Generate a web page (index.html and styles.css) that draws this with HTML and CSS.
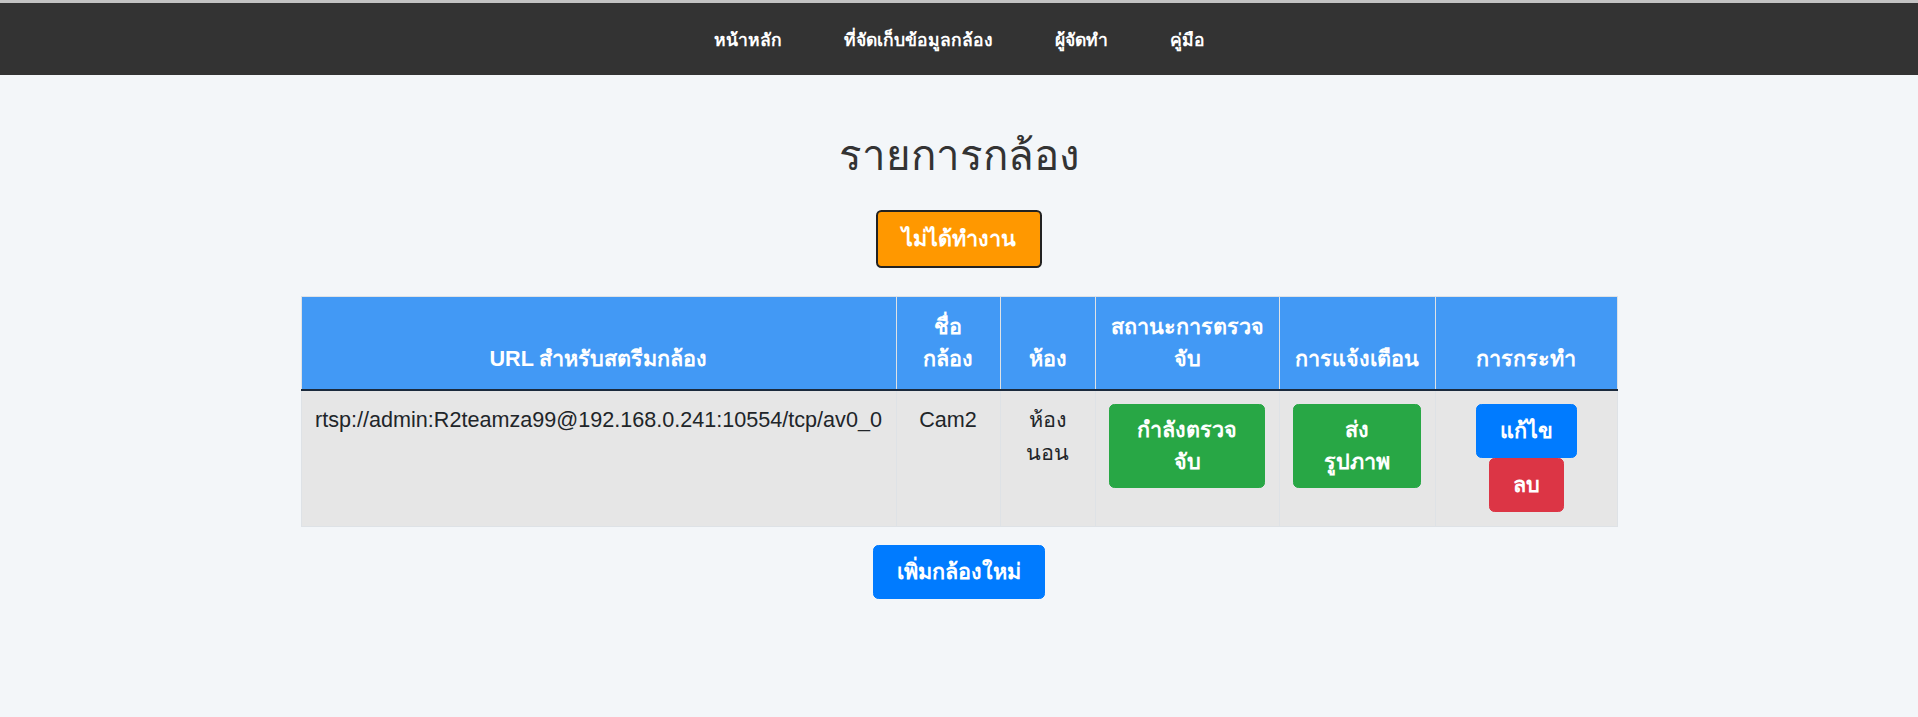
FILE: index.html
```html
<!DOCTYPE html>
<html lang="th">
<head>
<meta charset="utf-8">
<title>รายการกล้อง</title>
<link rel="stylesheet" href="styles.css">
</head>
<body>
<header class="topbar">
  <nav>
    <ul class="nav-list">
      <li><a href="#">หน้าหลัก</a></li>
      <li><a href="#">ที่จัดเก็บข้อมูลกล้อง</a></li>
      <li><a href="#">ผู้จัดทำ</a></li>
      <li><a href="#">คู่มือ</a></li>
    </ul>
  </nav>
</header>
<main class="page">
  <h1 class="page-title">รายการกล้อง</h1>
  <button class="btn btn-status">ไม่ได้ทำงาน</button>
  <table class="cam-table">
    <colgroup>
      <col class="c-url"><col class="c-name"><col class="c-room"><col class="c-state"><col class="c-alert"><col class="c-act">
    </colgroup>
    <thead>
      <tr>
        <th>URL สำหรับสตรีมกล้อง</th>
        <th>ชื่อ<br>กล้อง</th>
        <th>ห้อง</th>
        <th>สถานะการตรวจ<br>จับ</th>
        <th>การแจ้งเตือน</th>
        <th>การกระทำ</th>
      </tr>
    </thead>
    <tbody>
      <tr>
        <td class="url-cell">rtsp://admin:R2teamza99@192.168.0.241:10554/tcp/av0_0</td>
        <td>Cam2</td>
        <td>ห้อง<br>นอน</td>
        <td><button class="btn btn-success btn-block">กำลังตรวจ<br>จับ</button></td>
        <td><button class="btn btn-success btn-block">ส่ง<br>รูปภาพ</button></td>
        <td>
          <div class="actions">
            <button class="btn btn-primary">แก้ไข</button>
            <button class="btn btn-danger">ลบ</button>
          </div>
        </td>
      </tr>
    </tbody>
  </table>
  <button class="btn btn-primary btn-add">เพิ่มกล้องใหม่</button>
</main>
</body>
</html>
```
FILE: styles.css
```css
* { box-sizing: border-box; }
html, body { margin: 0; padding: 0; }
body {
  background: #f3f6f9;
  font-family: "Liberation Sans", Arial, sans-serif;
  font-size: 21.6px;
  line-height: 1.5;
  color: #212529;
  min-height: 717px;
}
.topbar {
  background: #333333;
  border-top: 3px solid #c3c3c3;
  height: 75px;
}
.nav-list {
  list-style: none;
  margin: 0;
  padding: 0;
  height: 72px;
  display: flex;
  justify-content: center;
  align-items: center;
  gap: 62px;
}
.nav-list a {
  color: #ffffff;
  text-decoration: none;
  font-size: 17.5px;
  font-weight: bold;
}
.page {
  display: flex;
  flex-direction: column;
  align-items: center;
  padding-top: 55px;
}
.page-title {
  margin: 0 0 28px;
  font-size: 42px;
  line-height: 52px;
  font-weight: 500;
  color: #333333;
}
.btn {
  font-family: inherit;
  font-size: 21.6px;
  line-height: 32.4px;
  font-weight: bold;
  color: #ffffff;
  border: 1px solid transparent;
  border-radius: 5.4px;
  padding: 9.8px 23px;
  cursor: pointer;
}
.btn-status {
  background: #ff9800;
  border: 2px solid #222222;
  padding: 10.8px 24px;
}
.btn-success { background: #28a745; border-color: #28a745; padding: 8.6px 10px; }
.btn-primary { background: #007bff; border-color: #007bff; }
.btn-danger { background: #dc3545; border-color: #dc3545; }
.btn-block { display: block; width: 100%; }
.cam-table {
  margin-top: 28px;
  width: 1316px;
  table-layout: fixed;
  border-collapse: collapse;
}
.c-url { width: 595px; }
.c-name { width: 104px; }
.c-room { width: 95px; }
.c-state { width: 184px; }
.c-alert { width: 156px; }
.c-act { width: 182px; }
.cam-table th,
.cam-table td {
  padding: 13.5px;
  border: 1px solid #dee2e6;
  line-height: 32.4px;
  text-align: center;
}
.cam-table th {
  background: #4299f5;
  color: #ffffff;
  font-weight: bold;
  vertical-align: bottom;
  border-bottom: 2px solid #1b2a3c;
}
.cam-table td {
  background: #e6e6e6;
  vertical-align: top;
}
.cam-table td.url-cell { text-align: left; }
.actions {
  display: flex;
  flex-direction: column;
  align-items: center;
}
.btn-add { margin-top: 18px; }
```
